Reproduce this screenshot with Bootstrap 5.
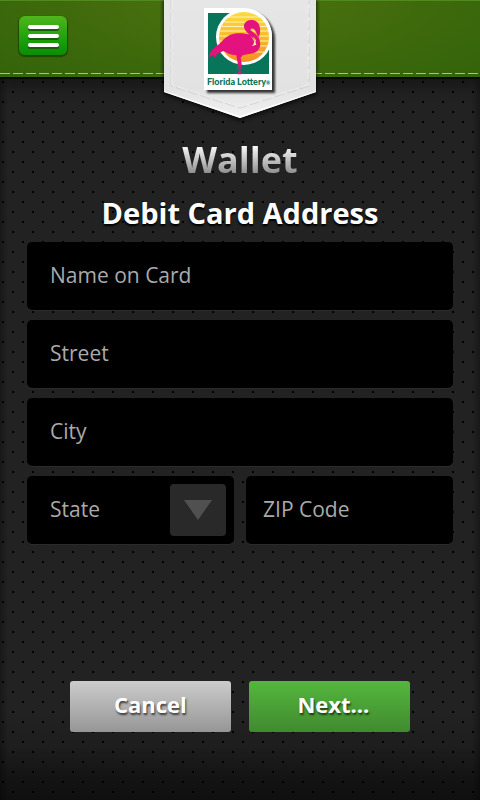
<!DOCTYPE html>
<html lang="en">
<head>
<meta charset="utf-8">
<meta name="viewport" content="width=device-width, initial-scale=1">
<title>Wallet – Debit Card Address</title>
<link href="https://cdn.jsdelivr.net/npm/bootstrap@5.3.0/dist/css/bootstrap.min.css" rel="stylesheet">
<style>
  body {
    font-family: "Open Sans", "Noto Sans", sans-serif;
    background-color: #222;
    color: #fff;
  }
  .screen {
    background-image:
      linear-gradient(90deg, rgba(0,0,0,.3), transparent 8px, transparent calc(100% - 8px), rgba(0,0,0,.3)),
      linear-gradient(0deg, rgba(0,0,0,.55), rgba(0,0,0,.45) 20px, rgba(0,0,0,.12) 55px, transparent 90px),
      radial-gradient(circle at 3px 2px, #000 1px, transparent 1px),
      radial-gradient(circle at 13px 12px, #000 1px, transparent 1px);
    background-size: auto, auto, 20px 20px, 20px 20px;
  }
  .topbar {
    height: 77px;
    background: radial-gradient(ellipse at 50% 0, #4c7310 0, #446d0d 34%, #33630a 100%);
    border-top: 1px solid #4f8a1d;
    box-shadow: 0 2px 0 #090c05, 0 5px 16px 3px rgba(0,0,0,.4);
  }
  .stitch {
    bottom: 3px;
    height: 1px;
    background: repeating-linear-gradient(90deg, #a5c57c 0 10px, transparent 10px 13px);
  }
  .menu-btn {
    width: 48px;
    height: 39px;
    margin: 15px 19px;
    border-radius: 6px;
    background: linear-gradient(#4fb61b, #129a08 75%, #0b8d07);
    box-shadow: 0 1px 1px 1px rgba(20,60,0,.7);
  }
  .ribbon { width: 160px; top: -1px; }
  .logo-text { font: 900 9px Lato, sans-serif; }
  .page-title {
    font-size: 36px;
    line-height: 48px;
    background: linear-gradient(#fff 18%, #868686 82%);
    -webkit-background-clip: text;
    background-clip: text;
    color: transparent;
  }
  .page-subtitle {
    font-size: 29px;
    line-height: 42px;
    text-shadow: 0 2px 2px #000;
  }
  main { padding: 59px 27px 68px; }
  .fields { gap: 10px; }
  .pair { display: grid; grid-template-columns: 1fr 1fr; gap: 12px; }
  .field, .field:focus {
    height: 68px;
    padding: 0 23px;
    font-size: 21px;
    color: #aaa;
    background: #000;
    border: 0;
    border-radius: 5px;
    box-shadow: 0 1px 1px rgba(255,255,255,.05);
  }
  .hint {
    top: 0;
    left: 23px;
    font-size: 21px;
    line-height: 66px;
    color: #aaa;
  }
  .field:not(:placeholder-shown):not(select) + .hint { display: none; }
  .field-zip, .field-zip:focus { padding: 0 17px; }
  .field-zip + .hint { left: 17px; }
  .drop {
    width: 56px;
    top: 8px;
    bottom: 8px;
    right: 8px;
    border-radius: 4px;
    background: #292929;
  }
  .actions { padding: 24px 43px 0; gap: 18px; }
  .action, .action:hover {
    height: 51px;
    padding: 0 0 5px;
    font-size: 22px;
    line-height: 28px;
    color: #fff;
    border: 0;
    border-radius: 3px;
    text-shadow: 1px 2px 2px rgba(0,0,0,.65);
  }
  .action-cancel, .action-cancel:hover { background: linear-gradient(#ccc, #969696); }
  .action-next, .action-next:hover { background: linear-gradient(#54b73d, #418a2f); padding-left: 8px; }
</style>
<script src="https://cdn.jsdelivr.net/npm/bootstrap@5.3.0/dist/js/bootstrap.bundle.min.js"></script>
</head>
<body>
<div class="screen min-vh-100 d-flex flex-column">
  <header class="topbar position-relative flex-shrink-0">
    <button type="button" class="menu-btn btn p-0 border-0 d-flex align-items-center justify-content-center" aria-label="Menu">
      <svg width="34" height="28" viewBox="0 0 34 28" aria-hidden="true">
        <g fill="#176008"><rect x="2" y="4" width="31" height="5" rx="2"/><rect x="2" y="13" width="31" height="5" rx="2"/><rect x="2" y="22" width="31" height="5" rx="2"/></g>
        <g fill="#fff"><rect x="2" y="3" width="31" height="4" rx="2"/><rect x="2" y="12" width="31" height="4" rx="2"/><rect x="2" y="21" width="31" height="4" rx="2"/></g>
      </svg>
    </button>
    <div class="stitch position-absolute start-0 end-0"></div>
    <svg class="ribbon position-absolute start-50 translate-middle-x" height="126" viewBox="0 0 160 126" role="img" aria-label="Florida Lottery">
      <defs>
        <linearGradient id="paper" x1="0" y1="0" x2="0" y2="1"><stop offset="0" stop-color="#e6e6e6"/><stop offset=".75" stop-color="#e2e2e2"/><stop offset="1" stop-color="#f2f2f2"/></linearGradient>
        <linearGradient id="sun" x1="0" y1="0" x2="0" y2="1"><stop offset="0" stop-color="#fbdc3e"/><stop offset=".5" stop-color="#fbb829"/><stop offset="1" stop-color="#f58a20"/></linearGradient>
        <filter id="soft" x="-20%" y="-20%" width="140%" height="140%"><feGaussianBlur stdDeviation="2"/></filter>
        <filter id="tight" x="-20%" y="-20%" width="140%" height="140%"><feGaussianBlur stdDeviation="1"/></filter>
        <clipPath id="disc"><circle cx="84" cy="37" r="25"/></clipPath>
        <clipPath id="card"><path d="M44 8H85A28 28 0 0 1 112 36V90H44z"/></clipPath>
      </defs>
      <path d="M3 0H157V94L80 121 3 94z" fill="#000" opacity=".65" filter="url(#soft)"/>
      <path d="M4 0H156V92L80 118 4 92z" fill="url(#paper)"/>
      <path d="M4 91L80 116 156 91V92L80 118 4 92z" fill="#fff"/>
      <path d="M11 0V86L80 108 149 86V0" fill="none" stroke="#d2d2d2" stroke-width="1" stroke-dasharray="10 3"/>
      <path d="M12 0V85L80 107 148 85V0" fill="none" stroke="#efefef" stroke-width="1" stroke-dasharray="10 3"/>
      <path d="M47 11H87A28 28 0 0 1 115 39V93H47z" fill="#222" opacity=".9" filter="url(#tight)"/>
      <path d="M44 8H85A28 28 0 0 1 112 36V90H44z" fill="#fff"/>
      <g clip-path="url(#card)">
        <path d="M48 13H84V36H109V74H48z" fill="#087459"/>
        <circle cx="84" cy="37" r="28" fill="#fff"/>
      </g>
      <g clip-path="url(#disc)">
        <path d="M56 12H110V64H56z" fill="url(#sun)"/>
        <path d="M56 17H110M56 22H110M56 26.500H110M56 31H110M56 36H110M56 41H110M56 46H110M56 52H110" stroke="#fff3bb" stroke-width="1"/>
      </g>
      <g transform="scale(.33333)">
        <path d="M145 174C151 150 166 142 180 130C192 116 205 104 222 101C240 98 258 101 272 104C279 107 281 118 287 126C291 121 284 113 275 108C260 99 250 88 252 74C256 62 269 57 282 61C292 64 300 74 300 88C301 100 299 107 295 111C290 103 288 94 282 87C276 84 270 85 272 91C281 98 294 105 299 121C304 139 297 154 282 159C268 163 256 163 248 166L242 173L245 191L241 210L243 223H233L238 207L237 191L234 211L230 211L233 190L229 166C213 165 201 160 190 153L171 162L163 173L159 165L149 171z" fill="#e3127e"/>
        <path d="M272 107Q285 119 289 134L276 139Q286 128 280 119z" fill="#fff0b0"/>
      </g>
      <text class="logo-text" x="47" y="85" fill="#087459">Florida Lottery<tspan font-size="5">®</tspan></text>
    </svg>
  </header>

  <main class="flex-grow-1 d-flex flex-column">
    <h1 class="page-title fw-bold text-center mb-0">Wallet</h1>
    <h2 class="page-subtitle fw-bold text-center mt-2 mb-2">Debit Card Address</h2>
    <form class="flex-grow-1 d-flex flex-column">
      <div class="fields d-flex flex-column">
        <div class="position-relative">
          <input class="field form-control" id="name" type="text" placeholder=" ">
          <label class="hint position-absolute pe-none" for="name">Name on Card</label>
        </div>
        <div class="position-relative">
          <input class="field form-control" id="street" type="text" placeholder=" ">
          <label class="hint position-absolute pe-none" for="street">Street</label>
        </div>
        <div class="position-relative">
          <input class="field form-control" id="city" type="text" placeholder=" ">
          <label class="hint position-absolute pe-none" for="city">City</label>
        </div>
        <div class="pair">
          <div class="position-relative">
            <select class="field form-control" id="state">
              <option value="" selected></option>
            </select>
            <label class="hint position-absolute pe-none" for="state">State</label>
            <span class="drop position-absolute pe-none d-flex align-items-center justify-content-center">
              <svg width="28" height="20" viewBox="0 0 28 20" aria-hidden="true"><path d="M0 0H28L14 20z" fill="#505050"/></svg>
            </span>
          </div>
          <div class="position-relative">
            <input class="field field-zip form-control" id="zip" type="text" inputmode="numeric" placeholder=" ">
            <label class="hint position-absolute pe-none" for="zip">ZIP Code</label>
          </div>
        </div>
      </div>
      <div class="actions d-flex mt-auto">
        <button type="button" class="action action-cancel btn fw-bold w-50">Cancel</button>
        <button type="submit" class="action action-next btn fw-bold w-50">Next...</button>
      </div>
    </form>
  </main>
</div>
</body>
</html>
